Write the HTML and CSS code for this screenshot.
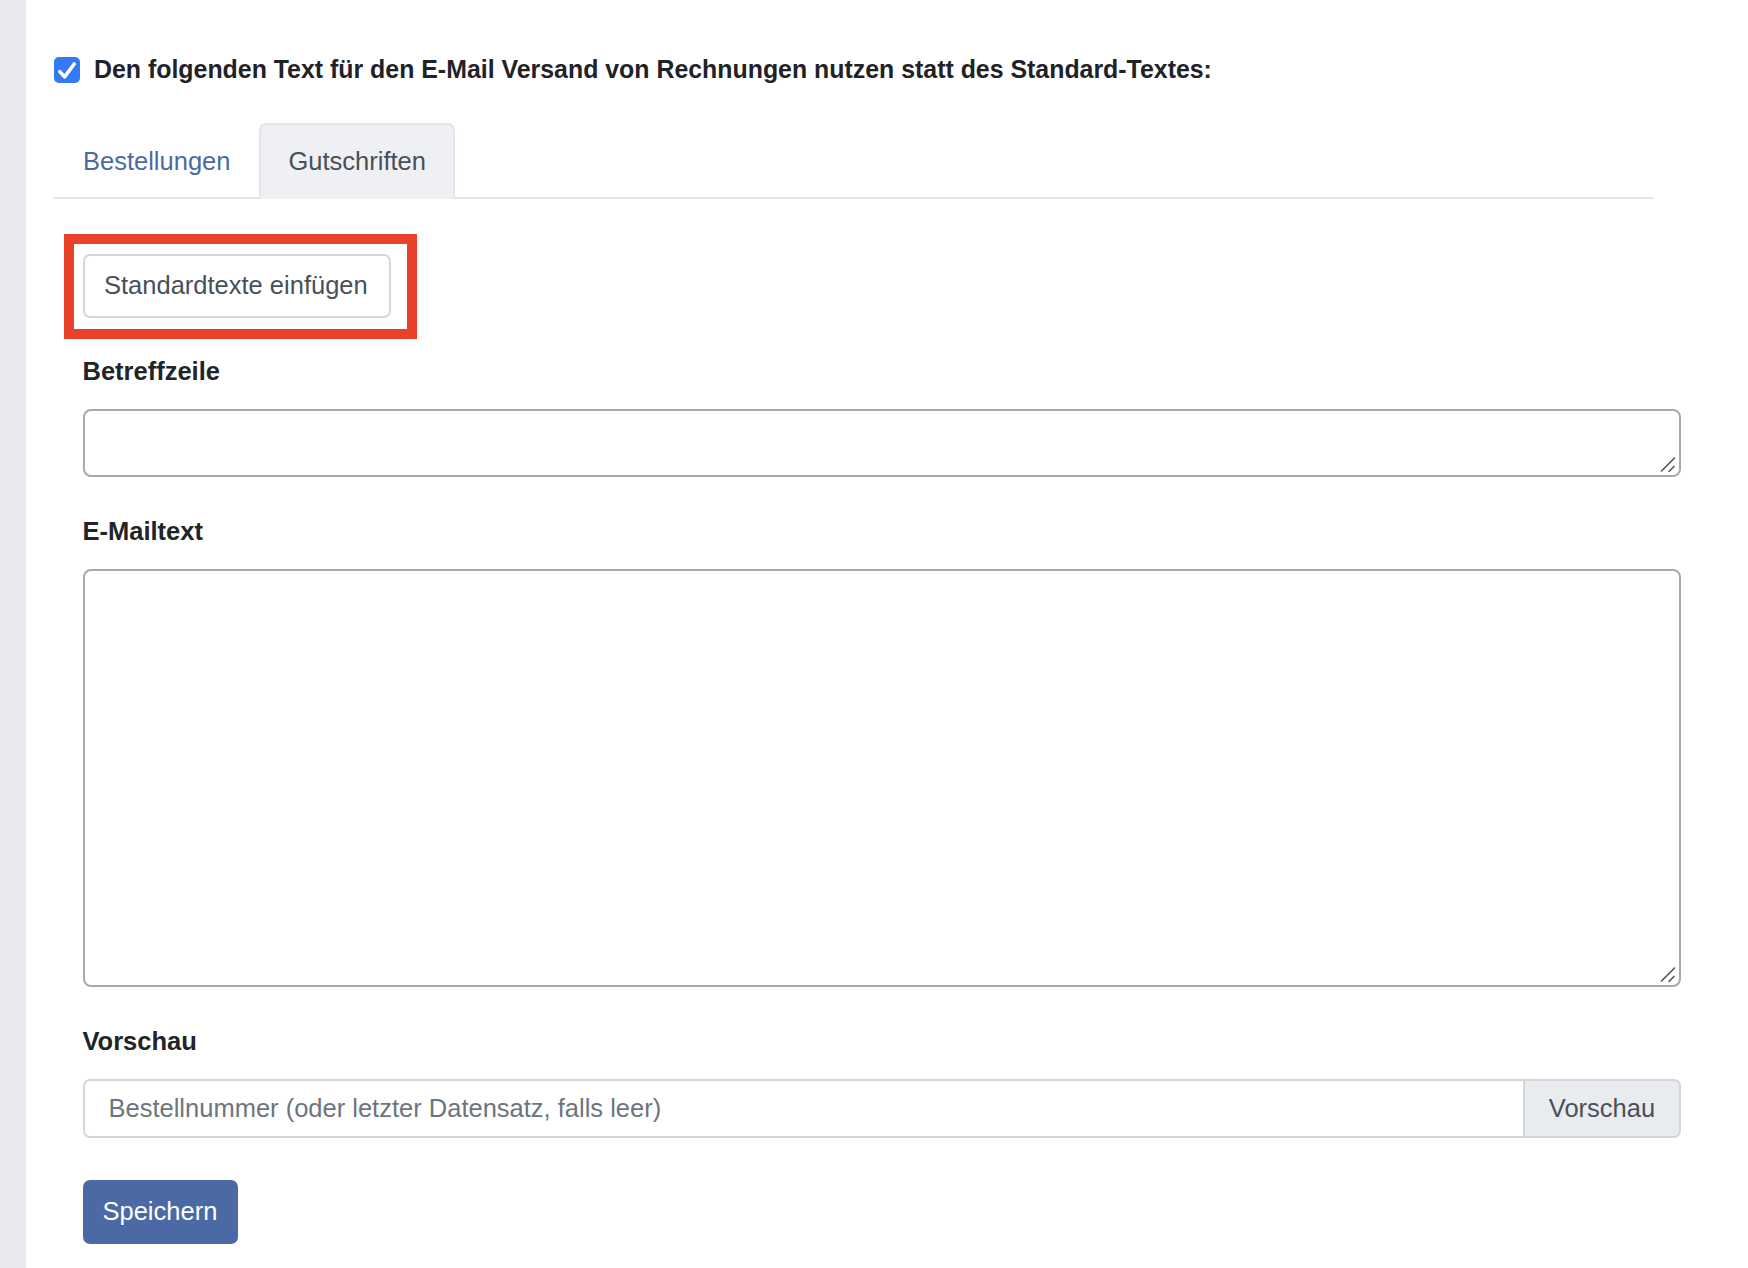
FILE: index.html
```html
<!DOCTYPE html>
<html lang="de">
<head>
    <meta charset="UTF-8">
    <meta name="viewport" content="width=device-width, initial-scale=1.0">
    <title>E-Mail Versand – Rechnungen</title>
    <link rel="stylesheet" href="styles.css">
</head>
<body>
    <div class="page">
        <!-- Seitenleiste (eingeklappt) -->
        <aside class="sidebar"></aside>

        <main class="main">
            <!-- Eigener Text statt Standard -->
            <label class="toggle-row">
                <span class="check-box">
                    <svg width="26" height="26" viewBox="0 0 26 26">
                        <path d="M5.8 14.6 L10.6 19.8 L20.2 7" fill="none" stroke="#fff" stroke-width="3.6" stroke-linecap="round" stroke-linejoin="round"/>
                    </svg>
                </span>
                <span class="toggle-text">Den folgenden Text für den E-Mail Versand von Rechnungen nutzen statt des Standard-Textes:</span>
            </label>

            <!-- Tabs -->
            <ul class="nav-tabs">
                <li class="nav-item"><a class="nav-link" href="#">Bestellungen</a></li>
                <li class="nav-item"><a class="nav-link active" href="#">Gutschriften</a></li>
            </ul>

            <div class="tab-content">
                <div class="highlight">
                    <button class="btn btn-outline" type="button">Standardtexte einfügen</button>
                </div>

                <div class="form-group first">
                    <label class="form-label" for="subject">Betreffzeile</label>
                    <div class="textarea-wrap">
                        <textarea class="form-textarea subject" id="subject"></textarea>
                        <svg class="grip" width="20" height="20" viewBox="0 0 20 20">
                            <path d="M3.5 16 L16.5 3 M11 16.5 L16 11.5" stroke="#555" stroke-width="1.6" stroke-linecap="round"/>
                        </svg>
                    </div>
                </div>

                <div class="form-group">
                    <label class="form-label" for="mailtext">E-Mailtext</label>
                    <div class="textarea-wrap">
                        <textarea class="form-textarea body" id="mailtext"></textarea>
                        <svg class="grip" width="20" height="20" viewBox="0 0 20 20">
                            <path d="M3.5 16 L16.5 3 M11 16.5 L16 11.5" stroke="#555" stroke-width="1.6" stroke-linecap="round"/>
                        </svg>
                    </div>
                </div>

                <div class="form-group">
                    <label class="form-label" for="preview">Vorschau</label>
                    <div class="input-group">
                        <input class="form-input" id="preview" type="text" placeholder="Bestellnummer (oder letzter Datensatz, falls leer)">
                        <button class="input-btn" type="button">Vorschau</button>
                    </div>
                </div>

                <button class="btn btn-primary" type="button">Speichern</button>
            </div>
        </main>
    </div>
</body>
</html>
```

FILE: styles.css
```css
body {
    margin: 0;
    padding: 0;
    background: #ffffff;
    color: #212529;
    font-family: "Liberation Sans", Arial, Helvetica, sans-serif;
    font-size: 25.5px;
    line-height: 37.5px;
}

.page {
    display: flex;
    min-height: 100vh;
}

/* eingeklappte Seitenleiste */
.sidebar {
    width: 26px;
    flex-shrink: 0;
    background: #e8e9ed;
}

.main {
    flex: 1;
    padding: 51px 0 0 28px;
}

/* Checkbox-Zeile */
.toggle-row {
    display: flex;
    align-items: center;
    gap: 14px;
    cursor: pointer;
}

.check-box {
    width: 26px;
    height: 26px;
    border-radius: 5px;
    background: #3479f5;
    display: flex;
    flex-shrink: 0;
}

.toggle-text {
    font-weight: bold;
    font-size: 24.9px;
    color: #1f2328;
}

/* Tabs */
.nav-tabs {
    list-style: none;
    margin: 34px 94px 0 0;
    padding: 0;
    display: flex;
    border-bottom: 2px solid #e2e5e9;
}

.nav-item {
    margin-bottom: -2px;
}

.nav-link {
    display: block;
    padding: 18px 27px 19px;
    border: 2px solid transparent;
    border-bottom: none;
    border-radius: 7px 7px 0 0;
    color: #4a6aa6;
    text-decoration: none;
}

.nav-link.active {
    background: #eef0f4;
    border-color: #e2e5e9;
    color: #495057;
}

.tab-content {
    margin: 35px 67px 0 28.5px;
}

/* rote Markierung um den Button */
.highlight {
    display: inline-block;
    margin-left: -18.5px;
    padding: 10px 16px 11px 9px;
    border: 10px solid #e9422a;
}

.btn {
    font-family: inherit;
    font-size: 25.5px;
    line-height: 37.5px;
    border-radius: 7px;
    cursor: pointer;
}

.btn-outline {
    display: block;
    padding: 11px 21px 11px 19px;
    background: #ffffff;
    border: 2px solid #d3d7dc;
    color: #495057;
}

.btn-primary {
    margin-top: 42px;
    padding: 13px 21px 13px 20px;
    background: #4b6aa5;
    border: none;
    color: #ffffff;
}

/* Formularfelder */
.form-group {
    margin-top: 35.5px;
}

.form-group.first {
    margin-top: 14px;
}

.form-label {
    display: block;
    font-weight: bold;
    margin-bottom: 19px;
    color: #212529;
}

.textarea-wrap {
    position: relative;
}

.form-textarea {
    display: block;
    box-sizing: border-box;
    width: 100%;
    margin: 0;
    border: 2px solid #a9a9a9;
    border-radius: 8px;
    font-family: inherit;
    font-size: 25.5px;
    padding: 8px 12px;
    resize: none;
}

.form-textarea.subject {
    height: 68px;
}

.form-textarea.body {
    height: 418px;
}

/* Griff zum Vergrößern */
.grip {
    position: absolute;
    right: 3px;
    bottom: 2px;
    pointer-events: none;
}

.input-group {
    display: flex;
    height: 59px;
}

.form-input {
    flex: 1;
    min-width: 0;
    box-sizing: border-box;
    margin: 0;
    padding: 0 24px;
    border: 2px solid #d3d7dc;
    border-right: none;
    border-radius: 7px 0 0 7px;
    font-family: inherit;
    font-size: 25.5px;
    color: #495057;
}

.form-input::placeholder {
    color: #6c757d;
}

.input-btn {
    box-sizing: border-box;
    width: 158px;
    margin: 0;
    padding: 0;
    background: #e9ecef;
    border: 2px solid #d3d7dc;
    border-radius: 0 7px 7px 0;
    font-family: inherit;
    font-size: 25.5px;
    color: #495057;
    cursor: pointer;
}
```
